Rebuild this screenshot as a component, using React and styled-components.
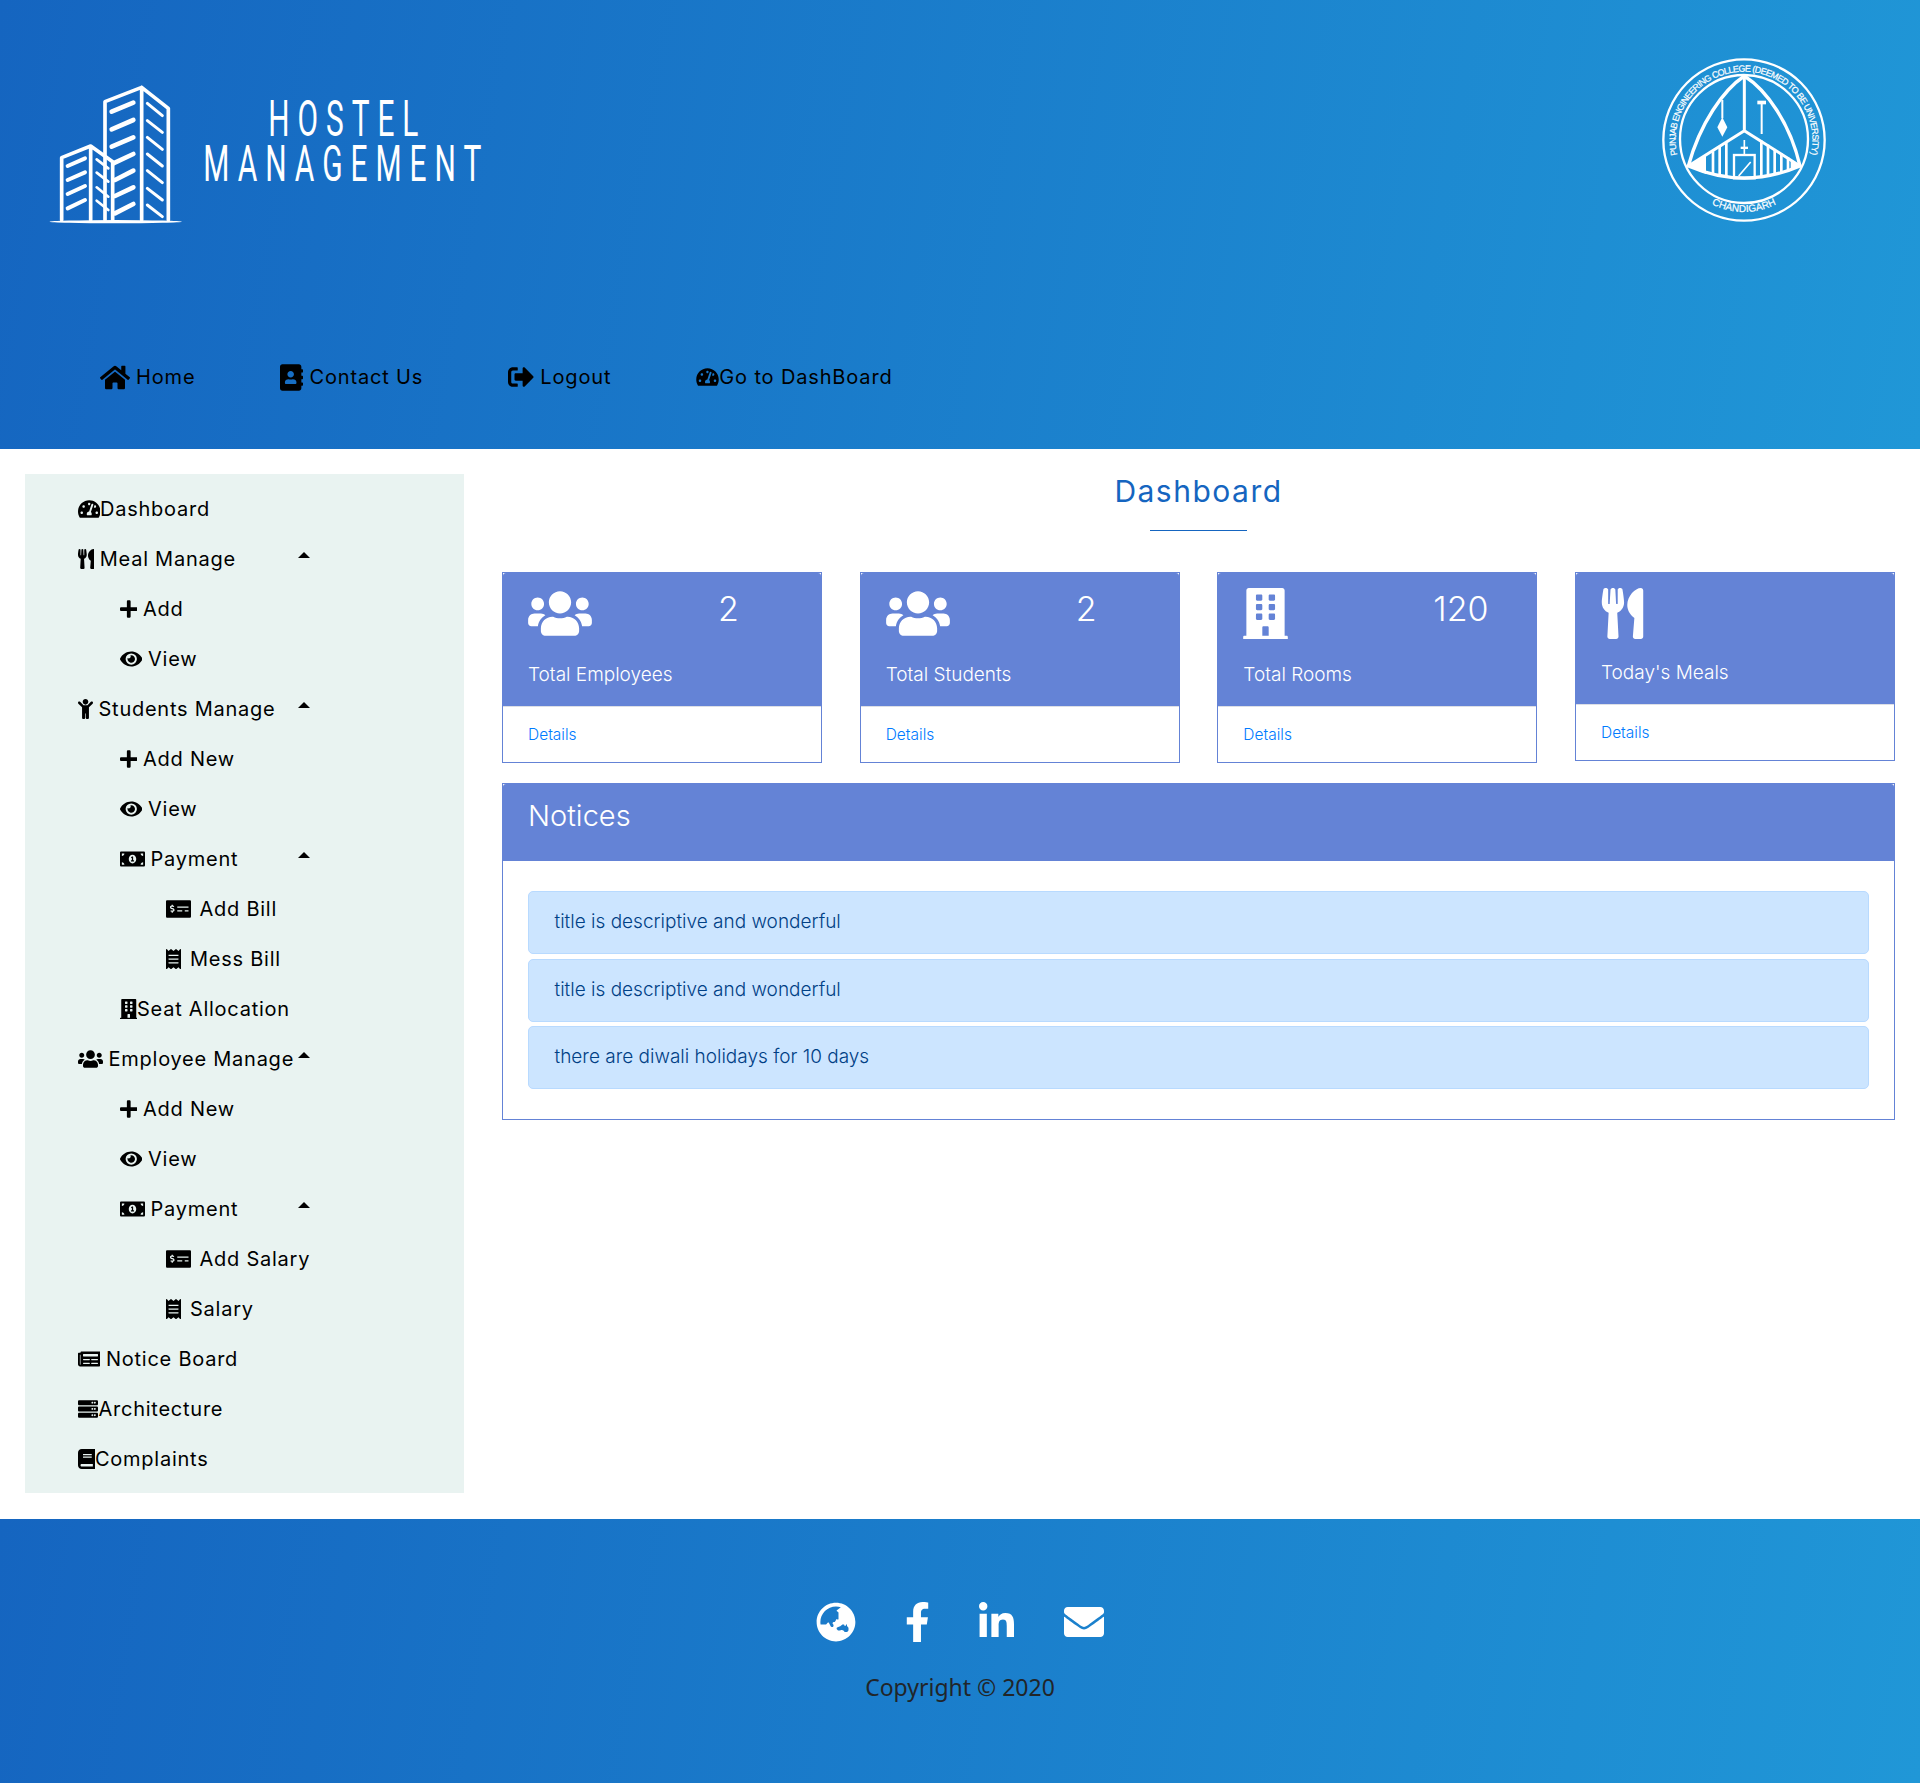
import styled, { createGlobalStyle } from "styled-components";
import {
  FaAddressBook,
  FaBook,
  FaBuilding,
  FaChild,
  FaEnvelope,
  FaEye,
  FaFacebookF,
  FaGlobeAsia,
  FaHome,
  FaLinkedinIn,
  FaMoneyBillAlt,
  FaMoneyCheckAlt,
  FaNewspaper,
  FaPlus,
  FaReceipt,
  FaServer,
  FaSignOutAlt,
  FaTachometerAlt,
  FaUsers,
  FaUtensils,
} from "react-icons/fa";

const GlobalStyle = createGlobalStyle`
  * { box-sizing: border-box; }
  body {
    margin: 0;
    background: #ffffff;
    font-family: "Inter", "Liberation Sans", sans-serif;
    color: #000000;
  }
`;

const Header = styled.header`
  height: 449px;
  padding-top: 40px;
  background: linear-gradient(100deg, #1565c0, #2097d7);
`;

const TopRow = styled.div`
  display: flex;
  justify-content: space-between;
  height: 311px;
  padding-right: 80px;
`;

const LogoBox = styled.svg`
  display: block;
  width: 520px;
  height: 200px;
  margin-top: 10px;
`;

const SealBox = styled.svg`
  display: block;
  width: 200px;
  height: 200px;
`;

const Nav = styled.nav`
  display: flex;
  align-items: center;
  gap: 85px;
  height: 52px;
  padding-left: 100px;
`;

const NavLink = styled.a`
  display: flex;
  align-items: center;
  gap: ${(p) => p.$gap}px;
  font-size: 20px;
  letter-spacing: 0.85px;
  color: #000000;
  svg {
    width: ${(p) => p.$iconW}px;
    height: ${(p) => p.$iconH}px;
    flex: none;
  }
`;

const Content = styled.div`
  display: flex;
  align-items: flex-start;
  height: 1070px;
  padding: 25px;
`;

const Sidebar = styled.aside`
  flex: none;
  width: 439px;
  padding: 9.5px 154.5px 9.5px 52.5px;
  background: #e9f3f1;
`;

const SideRow = styled.a`
  display: flex;
  align-items: center;
  height: 50px;
  padding-left: ${(p) => [0, 42, 88][p.$level]}px;
  font-size: 20px;
  letter-spacing: 0.75px;
  white-space: nowrap;
  color: #000000;
`;

const SideIcon = styled.span`
  display: flex;
  flex: none;
  margin-right: ${(p) => p.$gap}px;
  svg {
    display: block;
    width: ${(p) => p.$w}px;
    height: 20px;
  }
`;

const Caret = styled.span`
  flex: none;
  width: 0;
  height: 0;
  margin-left: auto;
  margin-bottom: 8px;
  border-left: 6px solid transparent;
  border-right: 6px solid transparent;
  border-bottom: 6px solid #000000;
`;

const Main = styled.main`
  flex: 1;
  min-width: 0;
  margin-left: 38px;
`;

const PageTitle = styled.h2`
  margin: 0;
  height: 34px;
  font-size: 30px;
  font-weight: 400;
  line-height: 34px;
  letter-spacing: 1.5px;
  text-align: center;
  color: #1565c0;
`;

const TitleRule = styled.div`
  width: 97px;
  height: 1px;
  margin: 22px auto 41px;
  background: #1565c0;
`;

const CardGrid = styled.div`
  display: grid;
  grid-template-columns: repeat(4, 1fr);
  align-items: start;
  gap: 37.67px;
  margin-bottom: 20px;
`;

const Card = styled.div`
  border: 1px solid #6483d6;
  background: #ffffff;
`;

const CardHead = styled.div`
  height: ${(p) => (p.$short ? 131 : 133)}px;
  padding: 15px 25px 0;
  border-radius: 3px 3px 0 0;
  background: #6483d6;
  color: #ffffff;
`;

const CardTop = styled.div`
  display: grid;
  grid-template-columns: 190px 1fr;
  height: ${(p) => (p.$short ? 73 : 75)}px;
`;

const CardIcon = styled.span`
  display: block;
  svg {
    display: block;
    width: ${(p) => p.$w}px;
    height: 51px;
  }
`;

const CardNumber = styled.div`
  padding-top: 1px;
  font-size: 34px;
  font-weight: 300;
  line-height: 40px;
`;

const CardTitle = styled.div`
  font-size: 19px;
  font-weight: 300;
  line-height: 24px;
`;

const CardFoot = styled.div`
  display: flex;
  align-items: center;
  height: 56px;
  padding: 0 25px 1px;
  border-top: 1px solid #dcdfe6;
  font-size: 15.5px;
  font-weight: 300;
  color: #007bff;
`;

const NoticeCard = styled.section`
  border: 1px solid #6483d6;
`;

const NoticeHead = styled.div`
  display: flex;
  align-items: flex-start;
  height: 77px;
  padding: 14px 25px 0;
  border-radius: 3px 3px 0 0;
  background: #6483d6;
  font-size: 29px;
  font-weight: 300;
  line-height: 36px;
  color: #ffffff;
`;

const NoticeBody = styled.div`
  display: flex;
  flex-direction: column;
  gap: 4.5px;
  padding: 30px 25px;
`;

const Alert = styled.div`
  display: flex;
  align-items: center;
  height: 63px;
  padding: 0 25.5px 2px;
  border: 1px solid #b8daff;
  border-radius: 5px;
  background: #cce5ff;
  font-size: 19px;
  font-weight: 300;
  color: #004085;
`;

const Footer = styled.footer`
  display: flex;
  flex-direction: column;
  align-items: center;
  height: 264px;
  padding-top: 83px;
  background: linear-gradient(100deg, #1565c0, #2097d7);
`;

const SocialRow = styled.div`
  display: flex;
  align-items: flex-start;
  gap: 49px;
  height: 40px;
  margin-bottom: 29px;
  color: #ffffff;
`;

const SocialLink = styled.a`
  display: block;
  color: #ffffff;
  svg {
    display: block;
    width: ${(p) => p.$w}px;
    height: 40px;
  }
`;

const Copyright = styled.p`
  margin: 0;
  font-family: "Noto Sans", "Open Sans", sans-serif;
  font-size: 23px;
  line-height: 32px;
  color: #212529;
`;

const menu = [
  { level: 0, icon: FaTachometerAlt, w: 22.5, gap: 0, label: "Dashboard" },
  { level: 0, icon: FaUtensils, w: 16.25, gap: 6, label: "Meal Manage", caret: true },
  { level: 1, icon: FaPlus, w: 17.5, gap: 6, label: "Add" },
  { level: 1, icon: FaEye, w: 22.5, gap: 6, label: "View" },
  { level: 0, icon: FaChild, w: 15, gap: 6, label: "Students Manage", caret: true },
  { level: 1, icon: FaPlus, w: 17.5, gap: 6, label: "Add New" },
  { level: 1, icon: FaEye, w: 22.5, gap: 6, label: "View" },
  { level: 1, icon: FaMoneyBillAlt, w: 25, gap: 6, label: "Payment", caret: true },
  { level: 2, icon: FaMoneyCheckAlt, w: 25, gap: 9, label: "Add Bill" },
  { level: 2, icon: FaReceipt, w: 15, gap: 9.5, label: "Mess Bill" },
  { level: 1, icon: FaBuilding, w: 17.5, gap: 0, label: "Seat Allocation" },
  { level: 0, icon: FaUsers, w: 25, gap: 6, label: "Employee Manage", caret: true },
  { level: 1, icon: FaPlus, w: 17.5, gap: 6, label: "Add New" },
  { level: 1, icon: FaEye, w: 22.5, gap: 6, label: "View" },
  { level: 1, icon: FaMoneyBillAlt, w: 25, gap: 6, label: "Payment", caret: true },
  { level: 2, icon: FaMoneyCheckAlt, w: 25, gap: 9, label: "Add Salary" },
  { level: 2, icon: FaReceipt, w: 15, gap: 9.5, label: "Salary" },
  { level: 0, icon: FaNewspaper, w: 22.5, gap: 6, label: "Notice Board" },
  { level: 0, icon: FaServer, w: 20, gap: 1, label: "Architecture" },
  { level: 0, icon: FaBook, w: 17.5, gap: 0, label: "Complaints" },
];

const cards = [
  { icon: FaUsers, w: 64, number: "2", title: "Total Employees" },
  { icon: FaUsers, w: 64, number: "2", title: "Total Students" },
  { icon: FaBuilding, w: 45, number: "120", title: "Total Rooms" },
  { icon: FaUtensils, w: 43, title: "Today's Meals", short: true },
];

const notices = [
  "title is descriptive and wonderful",
  "title is descriptive and wonderful",
  "there are diwali holidays for 10 days",
];

const bigWindows = [
  [335, 185, 400, 158], [335, 238, 400, 210], [335, 290, 400, 262], [340, 340, 400, 312],
  [345, 390, 400, 362], [345, 438, 400, 412], [345, 490, 400, 462],
  [442, 160, 487, 197], [442, 212, 487, 247], [442, 262, 487, 298], [442, 312, 487, 348],
  [442, 362, 487, 398], [442, 415, 487, 450], [442, 465, 487, 500],
];

const smallWindows = [
  [203, 348, 255, 325], [203, 390, 255, 367], [203, 432, 255, 408], [203, 475, 255, 450],
  [290, 328, 325, 355], [290, 368, 325, 395], [290, 412, 325, 440], [290, 452, 325, 480],
];

const Logo = () => (
  <LogoBox viewBox="0 0 1560 600">
    <g fill="none" stroke="#ffffff" strokeLinejoin="round" strokeLinecap="round">
      <path strokeWidth="11" d="M315 510V155L425 112L505 175V510M425 112V510" />
      <path strokeWidth="11" d="M185 510V323L272 288L338 335V510M272 288V510" />
      {bigWindows.map(([x1, y1, x2, y2]) => (
        <line key={`${x1}-${y1}`} x1={x1} y1={y1} x2={x2} y2={y2} strokeWidth={x1 < 420 ? 14 : 9} />
      ))}
      {smallWindows.map(([x1, y1, x2, y2]) => (
        <line key={`${x1}-${y1}`} x1={x1} y1={y1} x2={x2} y2={y2} strokeWidth={x1 < 270 ? 12 : 8} />
      ))}
    </g>
    <ellipse cx="347" cy="515" rx="198" ry="5" fill="#ffffff" />
    <g fill="#ffffff" fontFamily="Roboto, 'Liberation Sans', sans-serif" fontWeight="400" fontSize="150">
      <text x="805" y="258" textLength="474" lengthAdjust="spacingAndGlyphs" letterSpacing="40">HOSTEL</text>
      <text x="610" y="392" textLength="858" lengthAdjust="spacingAndGlyphs" letterSpacing="40">MANAGEMENT</text>
    </g>
  </LogoBox>
);

const stripes = [215, 235, 255, 360, 380, 400, 420, 440];

const Seal = () => (
  <SealBox viewBox="0 0 600 600">
    <defs>
      <path id="sealTop" d="M112 345A205 205 0 1 1 512 345" />
      <path id="sealBottom" d="M112 380A215 215 0 0 0 512 380" />
    </defs>
    <g fill="none" stroke="#ffffff">
      <circle cx="312" cy="300" r="242" strokeWidth="7" />
      <circle cx="312" cy="297" r="192" strokeWidth="7" />
      <path strokeWidth="10" d="M145 378C180 250 250 150 313 108C380 150 450 250 480 378Q313 450 145 378Z" />
      <path strokeWidth="9" d="M313 108V272M145 378L313 272L480 378" />
      <path strokeWidth="6" d="M247 180V235M365 192V282" />
      <rect x="282" y="345" width="62" height="70" strokeWidth="7" />
      <path strokeWidth="5" d="M296 408L332 366M313 300V342" />
    </g>
    <g fill="#ffffff">
      <path d="M247 232L262 262L247 290L232 262Z" />
      <rect x="352" y="182" width="26" height="11" />
      <path d="M148 378L198 346V402Z" />
      <path d="M478 378L452 362V392Z" />
      <rect x="302" y="320" width="22" height="7" />
      {stripes.map((x) => {
        const top = 378 - (167 - Math.abs(x - 313)) * 0.64;
        const bottom = 378 + 36 * (1 - ((x - 313) / 168) ** 2);
        return <rect key={x} x={x} y={top} width="8" height={bottom - top} />;
      })}
    </g>
    <g fill="#ffffff" stroke="#ffffff" strokeWidth="0.6" fontFamily="'Liberation Sans', sans-serif">
      <text fontSize="27">
        <textPath href="#sealTop" textLength="733" lengthAdjust="spacing">
          PUNJAB ENGINEERING COLLEGE (DEEMED TO BE UNIVERSITY)
        </textPath>
      </text>
      <text fontSize="30" textAnchor="middle">
        <textPath href="#sealBottom" startOffset="50%">CHANDIGARH</textPath>
      </text>
    </g>
  </SealBox>
);

const App = () => (
  <>
    <GlobalStyle />
    <Header>
      <TopRow>
        <Logo />
        <Seal />
      </TopRow>
      <Nav>
        <NavLink $gap={6} $iconW={30} $iconH={27}>
          <FaHome />
          Home
        </NavLink>
        <NavLink $gap={6} $iconW={23} $iconH={27}>
          <FaAddressBook />
          Contact Us
        </NavLink>
        <NavLink $gap={6} $iconW={26} $iconH={26}>
          <FaSignOutAlt />
          Logout
        </NavLink>
        <NavLink $gap={0} $iconW={23} $iconH={20}>
          <FaTachometerAlt />
          Go to DashBoard
        </NavLink>
      </Nav>
    </Header>
    <Content>
      <Sidebar>
        {menu.map(({ level, icon: Icon, w, gap, label, caret }, i) => (
          <SideRow key={i} $level={level}>
            <SideIcon $w={w} $gap={gap}>
              <Icon />
            </SideIcon>
            {label}
            {caret && <Caret />}
          </SideRow>
        ))}
      </Sidebar>
      <Main>
        <PageTitle>Dashboard</PageTitle>
        <TitleRule />
        <CardGrid>
          {cards.map(({ icon: Icon, w, number, title, short }) => (
            <Card key={title}>
              <CardHead $short={short}>
                <CardTop $short={short}>
                  <CardIcon $w={w}>
                    <Icon />
                  </CardIcon>
                  {number && <CardNumber>{number}</CardNumber>}
                </CardTop>
                <CardTitle>{title}</CardTitle>
              </CardHead>
              <CardFoot>Details</CardFoot>
            </Card>
          ))}
        </CardGrid>
        <NoticeCard>
          <NoticeHead>Notices</NoticeHead>
          <NoticeBody>
            {notices.map((text, i) => (
              <Alert key={i}>{text}</Alert>
            ))}
          </NoticeBody>
        </NoticeCard>
      </Main>
    </Content>
    <Footer>
      <SocialRow>
        <SocialLink $w={40}>
          <FaGlobeAsia />
        </SocialLink>
        <SocialLink $w={25}>
          <FaFacebookF />
        </SocialLink>
        <SocialLink $w={35}>
          <FaLinkedinIn />
        </SocialLink>
        <SocialLink $w={42}>
          <FaEnvelope />
        </SocialLink>
      </SocialRow>
      <Copyright>Copyright © 2020</Copyright>
    </Footer>
  </>
);

export default App;
